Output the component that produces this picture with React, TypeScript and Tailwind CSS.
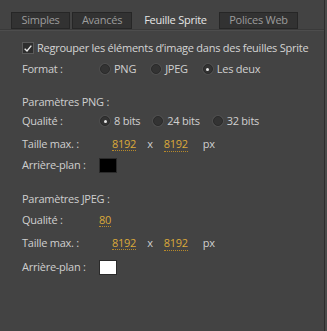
import React from 'react';

/* ─────────────────────────────────────────
   SMALL CONTROLS
───────────────────────────────────────── */
function Radio({ label, checked = false }: { label: string; checked?: boolean }) {
  return (
    <div className="flex items-center">
      <span className="w-[10px] h-[10px] rounded-full bg-[#333] border border-[#2a2a2a] shadow-[0_0_0_1px_#4e4e4e] flex items-center justify-center">
        {checked && <span className="w-[3px] h-[3px] rounded-full bg-[#e8e8e8]" />}
      </span>
      <span className="ml-[4px] text-[#d0d0d0]">{label}</span>
    </div>
  );
}

function Num({ value }: { value: string }) {
  return (
    <span className="text-[#dba93a] border-b border-dotted border-[#b88a2a] leading-[13px]">{value}</span>
  );
}

function Row({ label, className = '', children }: { label: string; className?: string; children?: React.ReactNode }) {
  return (
    <div className={`flex items-center h-[20px] ${className}`}>
      <span className="w-[77px] shrink-0 text-[#cfcfcf]">{label}</span>
      {children}
    </div>
  );
}

function SizeRow({ className = '' }: { className?: string }) {
  return (
    <Row label="Taille max. :" className={className}>
      <div className="flex items-center pl-[13px]">
        <Num value="8192" />
        <span className="ml-[11px] text-[#cfcfcf]">x</span>
        <span className="ml-[11px]"><Num value="8192" /></span>
        <span className="ml-[15px] text-[#cfcfcf]">px</span>
      </div>
    </Row>
  );
}

/* ─────────────────────────────────────────
   MAIN COMPONENT
───────────────────────────────────────── */
export default function App() {
  const tabs = ['Simples', 'Avancés', 'Feuille Sprite', 'Polices Web'];
  const widths = ['w-[59px]', 'w-[60px]', 'w-[83px]', 'w-[79px]'];

  return (
    <div className="w-[327px] h-[331px] bg-[#434343] flex text-[11px] tracking-[-0.25px] whitespace-nowrap overflow-hidden" style={{ fontFamily: '"Open Sans", "Liberation Sans", sans-serif' }}>
      <div className="w-[325px] h-full border-r border-[#2c2c2c] flex flex-col">
        {/* ── Tabs ── */}
        <div className="pt-[12px] pl-[11px] flex items-end gap-[2px] border-b border-[#3a3a3a] shadow-[0_1px_0_#4d4d4d]">
          {tabs.map((t, i) => (
            <div
              key={t}
              className={`${widths[i]} h-[17px] flex items-center justify-center ${
                i === 2
                  ? 'text-[#e6e6e6]'
                  : 'bg-[#323232] border border-[#262626] text-[#9c9c9c]'
              }`}
            >
              {t}
            </div>
          ))}
        </div>

        {/* ── Content ── */}
        <div className="pl-[22px] flex flex-col">
          <div className="flex items-center h-[20px] mt-[8px]">
            <span className="w-[12px] h-[12px] bg-[#2e2e2e] border border-[#5a5a5a] flex items-center justify-center">
              <svg viewBox="0 0 12 12" className="w-[11px] h-[11px]" fill="none" stroke="#e8e8e8" strokeWidth="1.6">
                <path d="M2 6.2 L4.8 9 L10 2.5" />
              </svg>
            </span>
            <span className="ml-[3px] text-[#d4d4d4]">Regrouper les éléments d’image dans des feuilles Sprite</span>
          </div>

          <Row label="Format :" className="mt-[1px]">
            <div className="flex items-center pl-[1px] gap-[15px]">
              <Radio label="PNG" />
              <Radio label="JPEG" />
              <Radio label="Les deux" checked />
            </div>
          </Row>

          <div className="h-[20px] mt-[13px] flex items-center text-[#cfcfcf]">Paramètres PNG :</div>

          <Row label="Qualité :" className="-mt-px">
            <div className="flex items-center pl-[1px] gap-[13px]">
              <Radio label="8 bits" checked />
              <Radio label="24 bits" />
              <Radio label="32 bits" />
            </div>
          </Row>

          <SizeRow className="mt-[3px]" />

          <Row label="Arrière-plan :" className="mt-[1px]">
            <span className="w-[18px] h-[15px] bg-black border border-[#2a2a2a]" />
          </Row>

          <div className="h-[20px] mt-[14px] flex items-center text-[#cfcfcf]">Paramètres JPEG :</div>

          <Row label="Qualité :" className="mt-[1px]">
            <Num value="80" />
          </Row>

          <SizeRow className="mt-[3px]" />

          <Row label="Arrière-plan :" className="mt-[4px]">
            <span className="w-[18px] h-[15px] bg-white border border-[#2a2a2a]" />
          </Row>
        </div>
      </div>
      <div className="flex-1 bg-[#4a4a4a]" />
    </div>
  );
}
